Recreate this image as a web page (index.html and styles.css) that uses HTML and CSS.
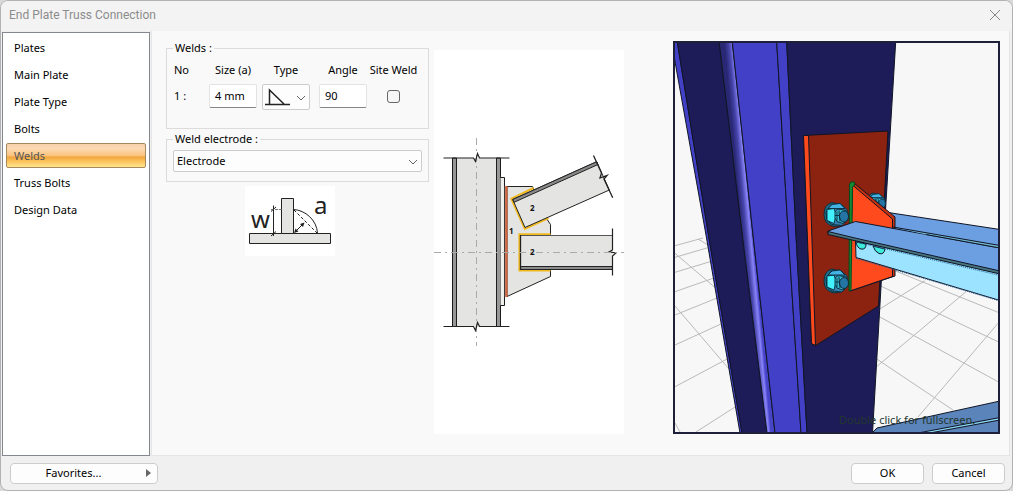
FILE: index.html
```html
<!DOCTYPE html>
<html lang="en">
<head>
<meta charset="utf-8">
<title>End Plate Truss Connection</title>
<link rel="stylesheet" href="styles.css">
</head>
<body>
<main class="dialog">
  <header class="titlebar">
    <h1 class="title">End Plate Truss Connection</h1>
    <button class="close" type="button" aria-label="Close">
      <svg width="12" height="12" viewBox="0 0 12 12"><path d="M1 1L11 11M11 1L1 11" stroke="#888" stroke-width="1" fill="none"/></svg>
    </button>
  </header>
  <div class="content">
    <nav class="sidebar">
      <button class="tab" type="button">Plates</button>
      <button class="tab" type="button">Main Plate</button>
      <button class="tab" type="button">Plate Type</button>
      <button class="tab" type="button">Bolts</button>
      <button class="tab tab-active" type="button" aria-current="page">Welds</button>
      <button class="tab" type="button">Truss Bolts</button>
      <button class="tab" type="button">Design Data</button>
    </nav>
    <section class="panel">
      <div class="settings">
        <fieldset class="group group-welds">
          <legend>Welds :</legend>
          <div class="weld-grid">
            <span class="col-no">No</span>
            <label for="size">Size (a)</label>
            <label for="type">Type</label>
            <label for="angle">Angle</label>
            <label for="site">Site Weld</label>
            <span class="col-no">1 :</span>
            <input class="field" id="size" type="text" value="4 mm">
            <span class="type-box">
              <select class="combo combo-type" id="type"><option label=" " value="fillet"></option></select>
              <svg class="type-icon" width="26" height="18" viewBox="0 0 26 18"><path d="M0 16.500H25M4.500 16V2L19 16" fill="none" stroke="#222" stroke-width="1.500"/></svg>
              <svg class="chevron" width="10" height="6" viewBox="0 0 10 6"><path d="M1 1L5 5L9 1" fill="none" stroke="#666"/></svg>
            </span>
            <input class="field" id="angle" type="text" value="90">
            <input class="check" id="site" type="checkbox">
          </div>
        </fieldset>
        <fieldset class="group group-electrode">
          <legend><label for="electrode">Weld electrode :</label></legend>
          <span class="combo-box">
            <select class="combo" id="electrode"><option>Electrode</option></select>
            <svg class="chevron" width="10" height="6" viewBox="0 0 10 6"><path d="M1 1L5 5L9 1" fill="none" stroke="#666"/></svg>
          </span>
        </fieldset>
        <svg class="weld-picture" width="90" height="70" viewBox="245 186 90 70" role="img" aria-label="Weld size">
          <g fill="#e4e4e2" stroke="#222" stroke-width="1"><path d="M249.500 233.500H330.500V243.500H249.500Z"/><path d="M281.500 198.500H293.500V233.500H281.500Z"/></g>
          <path d="M273.500 205.500V236M271 211.500L276 207M271 236L276 231.500" stroke="#222" fill="none"/>
          <path d="M271 209.500H282" stroke="#555" stroke-width=".8" stroke-dasharray="3 1" fill="none"/>
          <path d="M293.500 209.500C305 210 317 220 317.500 233.500" stroke="#222" fill="none"/>
          <path d="M294 210L317 233" stroke="#222" stroke-dasharray="3 2" fill="none"/>
          <path d="M295 232L303 224" stroke="#222" fill="none"/><path d="M294 233L295.500 228.500L298.500 231.500ZM304.500 222.500L300 224L303 227Z" fill="#222"/>
          <text x="251" y="228" class="weld-letter">w</text><text x="314" y="214" class="weld-letter">a</text>
        </svg>
      </div>

      <svg class="diagram" viewBox="434 50 190 384" role="img" aria-label="Weld positions">
        <path d="M452.500 158H500.500V326.500H452.500Z" fill="#e4e4e2"/>
        <path d="M452.500 158H456.500V326.500H452.500ZM496.500 158H500.500V326.500H496.500Z" fill="#979797" stroke="#1c1c1c"/>
        <path d="M500.500 177.500H504.500V305.500H500.500" fill="#eeeeec" stroke="#1c1c1c"/>
        <path d="M507 186.500H532.500L546.500 218.500L550.500 224.500V276.500L507 296.500Z" fill="#e4e4e2" stroke="#222"/>
        <path d="M506.300 186V297" stroke="#d5633b" stroke-width="2.300"/><path d="M504.700 186V297" stroke="#555" stroke-width=".7"/>
        <path d="M533.500 188L511.300 198.700L524.800 228.800L548.500 218" fill="none" stroke="#f2b91e" stroke-width="2"/>
        <path d="M512.700 199.500L596.700 161.700L609.300 190L525 227.500Z" fill="#e4e4e2" stroke="#222"/>
        <path d="M512.700 199.500L596.700 161.700L598 164.500L514 202.300Z" fill="#898989" stroke="#222"/>
        <path d="M593.500 155.500L601.500 173L600 178L607 175.500L604 179L612.700 197.700" fill="none" stroke="#222" stroke-width="1.300"/>
        <path d="M550.500 234.300H519.500V270.500H550.500" fill="none" stroke="#f2b91e" stroke-width="2.200"/>
        <path d="M520.500 235H612.500V269.500H520.500Z" fill="#e4e4e2"/>
        <path d="M520.500 266.500H612.500V269.500H520.500Z" fill="#8b8b8b" stroke="#222"/>
        <path d="M520.500 235.500H612.500" stroke="#555"/><path d="M520.500 235V270" stroke="#222" stroke-width="1.300"/>
        <path d="M612.500 228.500V250L609 252L616 253L612.500 256V275.500" fill="none" stroke="#222" stroke-width="1.200"/>
        <path d="M476.500 138V346M434 252.500H624" fill="none" stroke="#aaa" stroke-dasharray="7 4 2 4"/>
        <path d="M443.500 158H473.500L475.500 161.500L477.500 153.500L479.500 158H509.500M443.500 326.500H473.500L475.500 330.500L477.500 322.500L479.500 326.500H509.500" fill="none" stroke="#222" stroke-width="1.200"/>
        <g class="marks"><text x="530" y="211">2</text><text x="509" y="234">1</text><text x="530" y="255">2</text></g>
      </svg>

      <svg class="preview" viewBox="675 43 323 389" preserveAspectRatio="xMidYMid slice" role="img" aria-label="3D preview">
        <defs>
          <linearGradient id="round" gradientUnits="userSpaceOnUse" x1="742" y1="236" x2="753" y2="235">
            <stop offset="0" stop-color="#292875"/><stop offset=".4" stop-color="#4644aa"/><stop offset=".78" stop-color="#8883f8"/><stop offset="1" stop-color="#4844ca"/>
          </linearGradient>
          <g id="bolt" stroke="#082a38" stroke-width=".9" stroke-linejoin="round">
            <path d="M-12 0Q-12 -10 -4 -12L4 -10L5 11L-2 12Q-12 10 -12 0Z" fill="#1f6e87"/>
            <path d="M-10 -2L-5 -10L4 -11L11 -5L12 5L6 11L-4 10L-9 6Z" fill="#347fb0"/>
            <path d="M-9 -5L-2 -6L0 0L-2 9L-9 6Z" fill="#43f0ff"/>
            <path d="M-8 -6L-4 -10L4 -11L9 -6L0 -6Z" fill="#45b2e4"/>
            <path d="M-1 -2Q0 -6 5 -5L10 -4Q14 0 11 6L7 9L1 7Q-2 4 -1 -2Z" fill="#37b8d1"/>
            <ellipse cx="8" cy="2" rx="4.500" ry="5.500" fill="#2474a4"/>
            <path d="M1 -3V6M3 -4L4 7M-1 1H3" fill="none"/>
          </g>
        </defs>
        <path d="M670 40H1000V435H670Z" fill="#f7f7f7"/>
        <path class="floor" d="M675 245.700L703 238M675 257.300L708 247.700M675 272.300L710 261.700M675 291.700L713 278.300M675 315L717 298M675 345L722 323.500M675 386.700L729 358M696 432L735 407M698 239L708 245M675 253.300L715 287.500M675 306L729 369M675 423L680 432M893 270L998 312.300M880 285.700L998 341.700M880 317L998 381.700M876 358.500L953 410M925 280.700L879 309.500M966 291.700L875 368M998 323.300L918 417"/>
        <g class="edge">
          <path d="M671.500 42L706 235L740 433H742L708.500 235L677.300 42Z" fill="#4340c8"/>
          <path d="M677.300 42L708.500 235L742 433H767L742.300 235L719.200 42Z" fill="#1e1c58"/>
          <path d="M719.200 42L742.300 235L767 433H775L753 235L732.300 42Z" fill="url(#round)"/>
          <path d="M732.300 42L753 235L775 433H801L788.300 235L776.700 42Z" fill="#4340c8"/>
          <path d="M776.700 42L788.300 235L801 433H807L796 235L786.700 42Z" fill="#4340c8"/>
          <path d="M786.700 42L796 235L807 433H872.500L884 235L895.700 42Z" fill="#1e1c58"/>
          <path d="M803.500 135.500L888 131L878.500 306L815 346L811.500 343.500Z" fill="#8c2210"/>
          <path d="M803.500 135.500H808.500L815.500 345.500L811.500 343.500Z" fill="#ff4a1d"/>
        </g>
        <use href="#bolt" transform="translate(876 202) scale(.75)"/>
        <use href="#bolt" x="836" y="214.500"/>
        <use href="#bolt" x="836" y="281"/>
        <g class="edge">
          <path d="M888 212.500L1000 229.500V250L893 238Z" fill="#6c9fe1"/>
          <path d="M852.500 184L854 183L895 217V276L850 291Z" fill="#c5300f"/>
          <path d="M852.500 185L892.500 219V276.500L850 291Z" fill="#ff4a1d"/>
          <path d="M849.500 184L851 182H854.500V185L852.500 187L851 290.500L849 291Z" fill="#128b32" stroke="#07481d"/>
          <path d="M855.500 241L1000 272V300.500L856 257.500Z" fill="#9be3ff"/>
          <path d="M856 242L866 244Q866 250 861 249Q857 248 856 242ZM873 246L885 249Q884 255 879 253.500Q875 252 873 246Z" fill="#3bebdc"/>
          <path d="M828 231L855.500 221.500L1000 248V273.500L828 233Z" fill="#6c9fe1"/>
          <path d="M828 231.500L855 238L1000 271V274L828 234.500Z" fill="#477580"/>
          <path d="M926 234.500L1000 248V245.500L893 227" fill="#72bad1"/>
          <path d="M872 433L877 428L1000 401V434Z" fill="#5b84ba"/>
          <path d="M918 433L1000 417.500V420L930 433Z" fill="#8ad5f1"/>
        </g>
        <path d="M856 258.300L998 300.500M856 242L998 275" stroke="#235c91" stroke-dasharray="1 1" fill="none"/>
        <text class="preview-hint" x="839" y="424">Double click for fullscreen.</text>
      </svg>
    </section>
  </div>
  <footer class="footer">
    <button class="button button-favorites" type="button"><span class="button-text">Favorites...</span><svg width="5" height="8" viewBox="0 0 5 8"><path d="M0 0L5 4L0 8Z" fill="#666"/></svg></button>
    <button class="button" type="button">OK</button>
    <button class="button" type="button">Cancel</button>
  </footer>
</main>
</body>
</html>
```
FILE: styles.css
```css
* { box-sizing: border-box; }
body { margin: 0; background: #d9d9d9; color: #000; font: 11px/16px "Noto Sans", "Open Sans", sans-serif; }
button, input, select { font: inherit; color: inherit; }
.dialog { display: flex; flex-direction: column; min-height: 100vh; background: #f0f0f0; border: 1px solid #b2b2b2; border-radius: 8px; overflow: hidden; }
.titlebar { display: flex; align-items: center; justify-content: space-between; height: 30px; padding: 0 11px 2px 8px; background: #f3f3f3; }
.title { margin: 0; font: 400 12px/16px Roboto, "Noto Sans", sans-serif; color: #8c8c8c; }
.close { display: flex; padding: 0; border: 0; background: none; }
.content { display: flex; flex: 1; padding-right: 2px; }
.sidebar { display: flex; flex-direction: column; gap: 2px; width: 148px; flex: none; margin: 1px 1px 0; padding: 2px 3px; background: #fff; border: 1px solid #828790; }
.tab { height: 25px; padding: 0 7px; border: 1px solid transparent; border-radius: 2px; background: none; text-align: left; }
.tab-active { border-color: #a58a5e; color: #555; background: linear-gradient(#f8d0aa 0%, #fcd9b3 20%, #f9c27b 52%, #f3a43c 56%, #fbc45d 76%, #ffe58d 100%); }
.panel { display: flex; flex: 1; min-width: 0; padding: 9px 9px 20px 14px; background: #f9f9f9; border: 1px solid #e5e5e5; border-top: 0; }
.settings { width: 263px; flex: none; display: flex; flex-direction: column; }
.group { margin: 0; padding: 0 6px; border: 1px solid #dcdcdc; min-width: 0; }
.group legend { padding: 0 2px; height: 16px; line-height: 16px; }
.group-welds { height: 89px; }
.group-electrode { height: 51px; margin-top: 2px; padding-top: 3px; }
.weld-grid { display: grid; grid-template-columns: 31px 48px 48px 56px 35px; column-gap: 5px; row-gap: 6px; justify-items: center; align-items: start; padding-top: 6px; white-space: nowrap; }
.weld-grid .col-no { justify-self: start; padding-left: 1px; }
.weld-grid .col-no:nth-of-type(2) { padding-top: 4px; }
.field { width: 48px; height: 24px; padding: 0 5px 2px; border: 1px solid #e3e3e3; border-bottom-color: #868686; border-radius: 2px; background: #fff; }
.type-box, .combo-box { position: relative; display: block; width: 100%; }
.combo { appearance: none; display: block; width: 100%; height: 22px; padding: 0 3px; border: 1px solid #ccc; border-radius: 2px; background: #fdfdfd; }
.combo-type { height: 26px; }
.chevron, .type-icon { position: absolute; pointer-events: none; }
.chevron { right: 4px; top: 50%; margin-top: -2px; }
.type-icon { left: 3px; top: 4px; }
.check { appearance: none; width: 13px; height: 13px; margin: 6px 0 0; border: 1px solid #666; border-radius: 3px; background: #f6f6f6; }
.weld-picture { align-self: flex-start; margin: 4px 0 0 79px; background: #fff; }
.weld-letter { font-size: 24px; fill: #222; }
.diagram { width: 190px; height: 384px; flex: none; margin: 10px 49px 0 5px; background: #fff; }
.marks { font-size: 8px; font-weight: 700; fill: #111; }
.preview { flex: 1; min-width: 0; height: 393px; margin-top: 1px; border: 2px solid #1e1f38; background: #f7f7f7; }
.floor { fill: none; stroke: #b9b9b9; stroke-width: 1; }
.edge { stroke: #101525; stroke-width: 1; }
.preview-hint { font-size: 11px; fill: #23372f; }
.footer { display: flex; align-items: center; gap: 8px; height: 34px; padding: 0 7px 0 9px; }
.button { width: 73px; height: 21px; padding: 0; border: 1px solid #ccc; border-radius: 4px; background: #fdfdfd; }
.button-favorites { display: flex; align-items: center; width: 148px; padding-right: 6px; margin-right: auto; }
.button-text { flex: 1; padding-right: 10px; }
```
